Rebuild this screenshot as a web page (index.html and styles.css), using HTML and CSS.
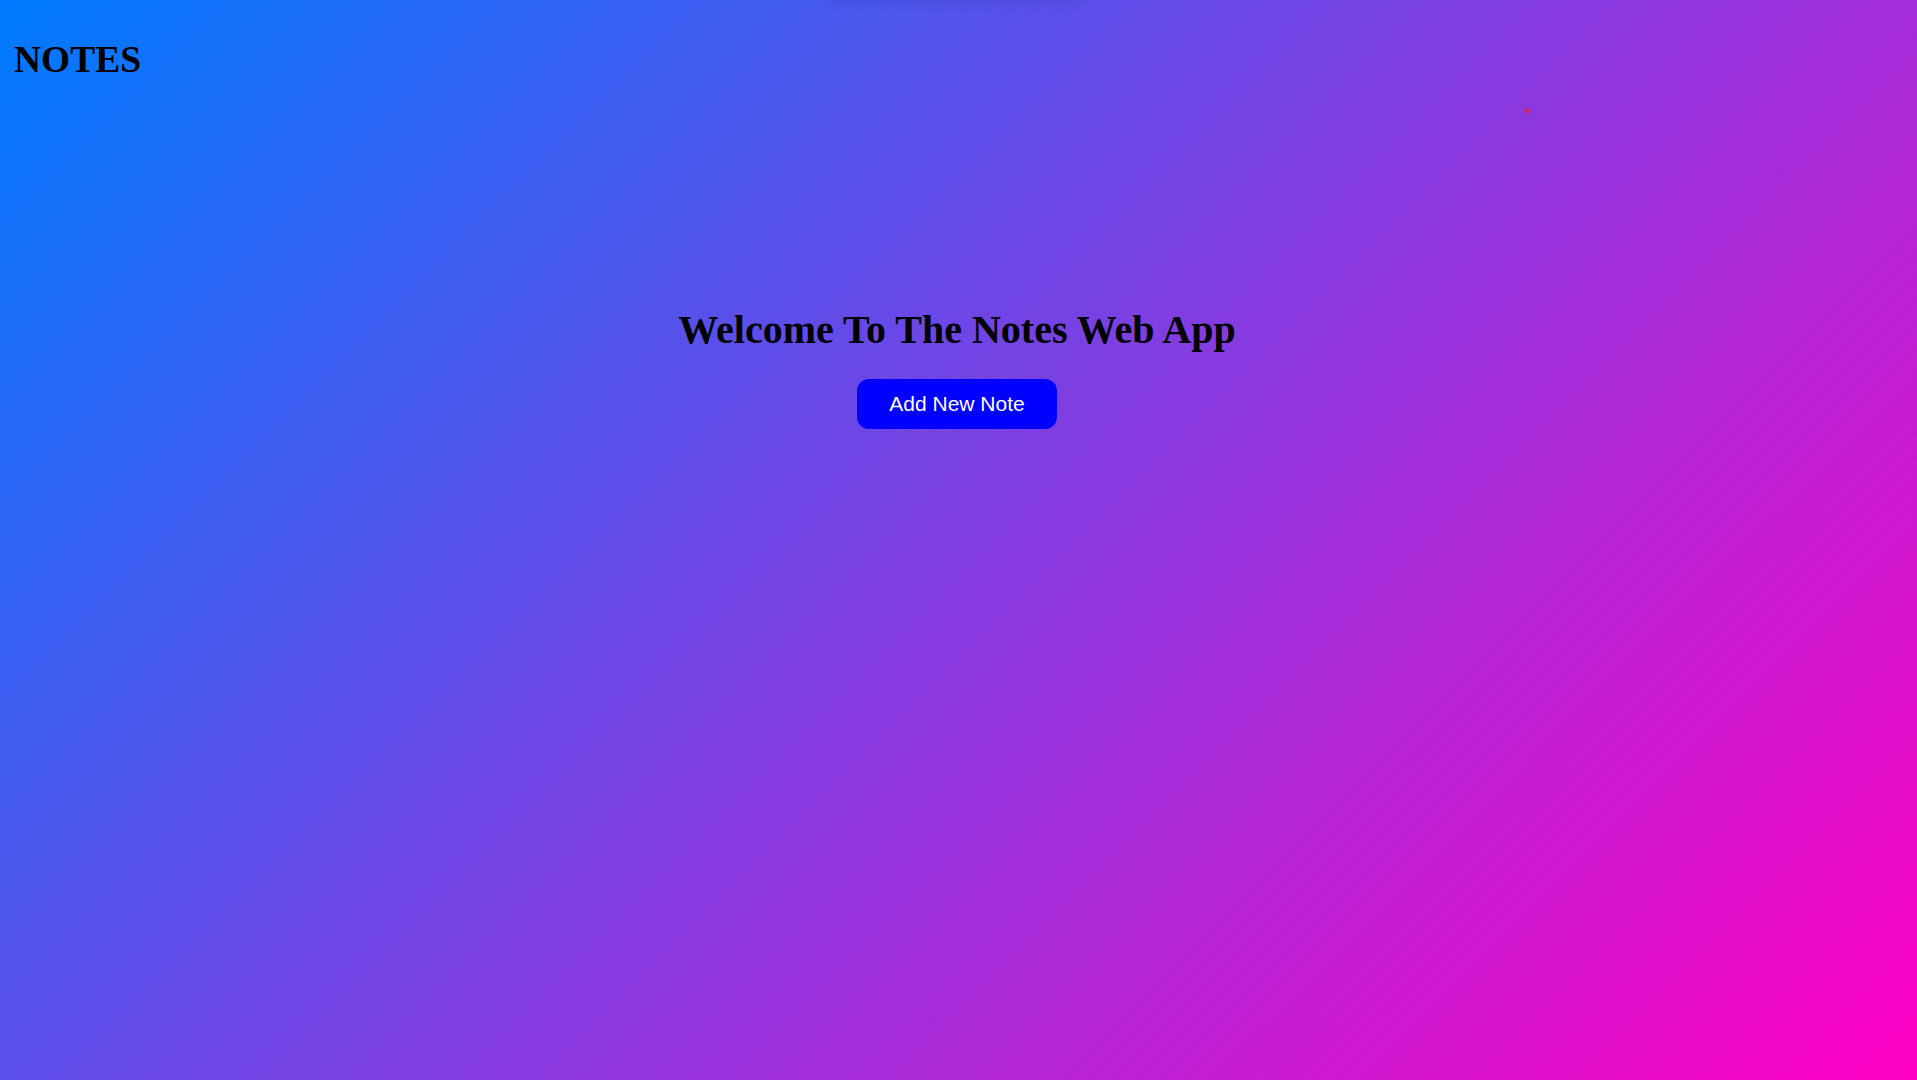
FILE: index.html
```html
<!DOCTYPE html>
<html lang="en">
<head>
<meta charset="utf-8">
<title>Notes</title>
<link rel="stylesheet" href="styles.css">
</head>
<body>
<div class="top-shade"></div>
<header class="site-header">
  <h1 class="logo">NOTES</h1>
</header>
<main class="hero">
  <h2 class="hero-title">Welcome To The Notes Web App</h2>
  <button class="add-btn" type="button">Add New Note</button>
</main>
<span class="red-dot"></span>
</body>
</html>
```

FILE: styles.css
```css
html, body {
  margin: 0;
  padding: 0;
}
body {
  min-height: 100vh;
  background: linear-gradient(135deg, #007bff 0%, #ff00c3 100%);
  font-family: "Liberation Serif", "Times New Roman", serif;
  color: #000;
  position: relative;
  overflow: hidden;
}
.site-header {
  padding: 39px 0 0 14px;
}
.logo {
  margin: 0;
  font-size: 37.5px;
  line-height: 42px;
  font-weight: bold;
}
.hero {
  display: flex;
  flex-direction: column;
  align-items: center;
  padding-top: 226px;
  padding-right: 3px;
}
.hero-title {
  margin: 0;
  font-size: 40px;
  line-height: 45px;
  font-weight: bold;
}
.add-btn {
  margin-top: 27px;
  background: #0000ff;
  color: #fff;
  border: none;
  border-radius: 12px;
  font-family: "Liberation Sans", Arial, sans-serif;
  font-size: 21px;
  line-height: 24px;
  padding: 13px 32px;
  cursor: pointer;
}
.red-dot {
  position: absolute;
  left: 1525px;
  top: 109px;
  width: 4px;
  height: 4px;
  border-radius: 50%;
  background: #e0203a;
  box-shadow: 0 0 4px 2px rgba(200, 40, 120, 0.25);
}
.top-shade {
  position: absolute;
  left: 830px;
  top: -6px;
  width: 250px;
  height: 6px;
  box-shadow: 0 0 12px rgba(0, 0, 40, 0.2);
}
```
